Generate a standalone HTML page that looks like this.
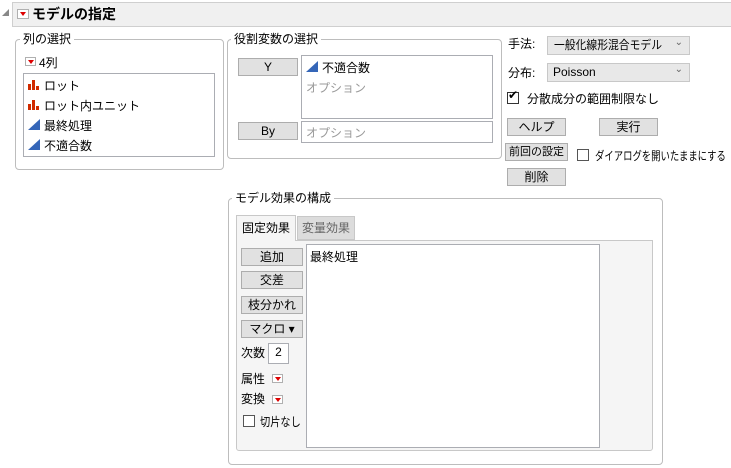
<!DOCTYPE html>
<html><head><meta charset="utf-8"><style>
body{margin:0;width:731px;height:468px;background:#fff;font-family:"Liberation Sans","Noto Sans CJK JP",sans-serif;font-size:12px;color:#000;position:relative;overflow:hidden}
.a{position:absolute;white-space:nowrap}
.grp{position:absolute;border:1px solid #bdbdbd;border-radius:4px}
.lbl{position:absolute;background:#fff;padding:0 3px;line-height:14px;white-space:nowrap}
.btn{position:absolute;background:#e1e1e1;border:1px solid #adadad;text-align:center;line-height:16px;box-sizing:border-box;white-space:nowrap}
.box{position:absolute;background:#fff;border:1px solid #abadb3;box-sizing:border-box}
.red{position:absolute;width:11px;height:9px;border:1px solid #b0b0b0;background:#fff;box-sizing:border-box}
.red:after{content:"";position:absolute;left:2px;top:2px;border-left:3px solid transparent;border-right:3px solid transparent;border-top:4px solid #d00}
.cb{position:absolute;width:12px;height:12px;border:1px solid #333;background:#fff;box-sizing:border-box}
.tri{position:absolute;width:0;height:0;border-left:12px solid transparent;border-bottom:11px solid #3566b8}
.bar{position:absolute;background:#d02a00}
.sel{position:absolute;background:#e8e8e8;border:1px solid #c8c8c8;box-sizing:border-box;line-height:17px;padding-left:5px;white-space:nowrap}
.sel:after{content:"⌄";position:absolute;right:6px;top:-3px;color:#666;font-size:10px}
.sq{transform-origin:0 0}
</style></head><body>
<div class="a" style="left:2px;top:9px;width:0;height:0;border-left:7px solid transparent;border-bottom:7px solid #888"></div>
<div class="a" style="left:12px;top:2px;width:718px;height:23px;background:#f0f0f0;border:1px solid #cfcfcf"></div>
<div class="red" style="left:17px;top:9px;width:12px;height:10px"></div>
<div class="a" style="left:32px;top:5px;font-size:14px;font-weight:bold;line-height:18px">モデルの指定</div>

<div class="grp" style="left:15px;top:39px;width:207px;height:129px"></div>
<div class="lbl" style="left:20px;top:32px">列の選択</div>
<div class="red" style="left:25px;top:57px"></div>
<div class="a" style="left:39px;top:54px">4列</div>
<div class="box" style="left:23px;top:73px;width:192px;height:84px"></div>
<div class="bar" style="left:28px;top:84px;width:3px;height:6px"></div><div class="bar" style="left:32px;top:80px;width:3px;height:10px"></div><div class="bar" style="left:36px;top:86px;width:3px;height:4px"></div>
<div class="a" style="left:44px;top:77px">ロット</div>
<div class="bar" style="left:28px;top:104px;width:3px;height:6px"></div><div class="bar" style="left:32px;top:100px;width:3px;height:10px"></div><div class="bar" style="left:36px;top:106px;width:3px;height:4px"></div>
<div class="a" style="left:44px;top:97px">ロット内ユニット</div>
<div class="tri" style="left:28px;top:119px"></div><div class="a" style="left:44px;top:117px">最終処理</div>
<div class="tri" style="left:28px;top:139px"></div><div class="a" style="left:44px;top:137px">不適合数</div>

<div class="grp" style="left:227px;top:39px;width:273px;height:118px"></div>
<div class="lbl" style="left:231px;top:32px">役割変数の選択</div>
<div class="btn" style="left:238px;top:58px;width:60px;height:18px">Y</div>
<div class="box" style="left:301px;top:55px;width:192px;height:64px"></div>
<div class="tri" style="left:306px;top:61px"></div><div class="a" style="left:322px;top:59px">不適合数</div>
<div class="a" style="left:306px;top:79px;color:#999">オプション</div>
<div class="btn" style="left:238px;top:122px;width:60px;height:18px">By</div>
<div class="box" style="left:301px;top:121px;width:192px;height:22px"></div>
<div class="a" style="left:306px;top:124px;color:#999">オプション</div>

<div class="a" style="left:508px;top:35px">手法:</div>
<div class="sel" style="left:547px;top:36px;width:143px;height:19px"><span class="a sq" style="left:6px;top:0;transform:scaleX(0.9)">一般化線形混合モデル</span></div>
<div class="a" style="left:508px;top:64px">分布:</div>
<div class="sel" style="left:547px;top:63px;width:143px;height:19px">Poisson</div>
<div class="cb" style="left:507px;top:92px"></div><div class="a" style="left:508px;top:88px;font-size:12px">✔</div>
<div class="a" style="left:527px;top:90px">分散成分の範囲制限なし</div>
<div class="btn" style="left:507px;top:118px;width:59px;height:18px">ヘルプ</div>
<div class="btn" style="left:599px;top:118px;width:59px;height:18px">実行</div>
<div class="btn" style="left:505px;top:143px;width:63px;height:18px;font-size:11px">前回の設定</div>
<div class="cb" style="left:577px;top:149px;border-color:#555"></div>
<div class="a sq" style="left:595px;top:147px;transform:scaleX(0.78)">ダイアログを開いたままにする</div>
<div class="btn" style="left:507px;top:168px;width:59px;height:18px">削除</div>

<div class="grp" style="left:228px;top:198px;width:433px;height:265px"></div>
<div class="lbl" style="left:232px;top:191px">モデル効果の構成</div>
<div class="a" style="left:236px;top:240px;width:417px;height:211px;background:#f5f5f5;border:1px solid #c8c8c8;border-radius:0 0 3px 3px;box-sizing:border-box"></div>
<div class="a" style="left:236px;top:215px;width:60px;height:26px;background:#f5f5f5;border:1px solid #c8c8c8;border-bottom:none;box-sizing:border-box;text-align:center;line-height:24px">固定効果</div>
<div class="a" style="left:297px;top:216px;width:58px;height:24px;background:#dcdcdc;border:1px solid #c8c8c8;box-sizing:border-box;text-align:center;line-height:22px;color:#666">変量効果</div>
<div class="btn" style="left:241px;top:248px;width:62px;height:18px">追加</div>
<div class="btn" style="left:241px;top:271px;width:62px;height:18px">交差</div>
<div class="btn" style="left:241px;top:296px;width:62px;height:18px">枝分かれ</div>
<div class="btn" style="left:241px;top:320px;width:62px;height:18px">マクロ ▾</div>
<div class="a" style="left:241px;top:344px">次数</div>
<div class="box" style="left:268px;top:343px;width:21px;height:21px;text-align:center;line-height:17px">2</div>
<div class="a" style="left:241px;top:370px">属性</div><div class="red" style="left:272px;top:374px"></div>
<div class="a" style="left:241px;top:390px">変換</div><div class="red" style="left:272px;top:395px"></div>
<div class="cb" style="left:243px;top:415px;border-color:#555"></div>
<div class="a sq" style="left:260px;top:413px;transform:scaleX(0.85)">切片なし</div>
<div class="box" style="left:306px;top:244px;width:294px;height:204px"></div>
<div class="a" style="left:310px;top:248px">最終処理</div>
</body></html>
